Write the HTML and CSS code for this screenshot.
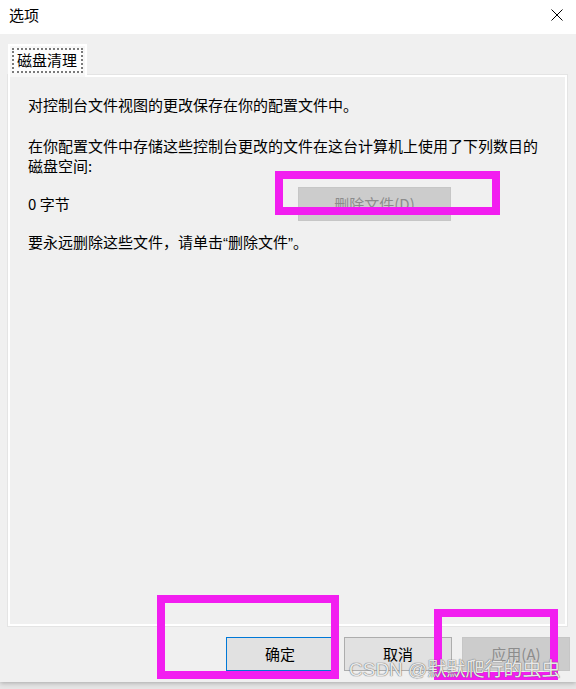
FILE: index.html
```html
<!DOCTYPE html>
<html lang="zh-CN">
<head>
<meta charset="utf-8">
<title>选项</title>
<link rel="stylesheet" href="styles.css">
</head>
<body>
<div class="window">
  <div class="titlebar">
    <span class="title">选项</span>
    <svg class="close" width="12" height="12" viewBox="0 0 12 12" aria-hidden="true">
      <path d="M0.5 0.5 L11.5 11.5 M11.5 0.5 L0.5 11.5" stroke="#000" stroke-width="1" fill="none"/>
    </svg>
  </div>
  <div class="content">
    <div class="tabs">
      <div class="tab"><span class="tab-label">磁盘清理</span></div>
    </div>
    <div class="panel">
      <p class="line gap-after">对控制台文件视图的更改保存在你的配置文件中。</p>
      <p class="line">在你配置文件中存储这些控制台更改的文件在这台计算机上使用了下列数目的<br>磁盘空间:</p>
      <div class="size-row">
        <span class="size-label">0 字节</span>
        <button class="btn btn-disabled btn-delete" disabled>删除文件(D)</button>
      </div>
      <p class="line">要永远删除这些文件，请单击<span class="latin-quote">“</span>删除文件<span class="latin-quote">”</span>。</p>
    </div>
    <div class="actions">
      <button class="btn btn-default">确定</button>
      <button class="btn">取消</button>
      <button class="btn btn-disabled" disabled>应用(A)</button>
    </div>
  </div>
  <div class="mark mark-1"></div>
  <div class="mark mark-2"></div>
  <div class="mark mark-3"></div>
  <div class="watermark">CSDN @默默爬行的虫虫</div>
</div>
</body>
</html>
```

FILE: styles.css
```css
html, body {
  margin: 0;
  padding: 0;
}
body {
  width: 576px;
  height: 689px;
  overflow: hidden;
  background: #e6e6e6;
  font-family: "Noto Sans CJK SC", "Liberation Sans", sans-serif;
  font-size: 15px;
  color: #000;
}
.window {
  position: relative;
  width: 576px;
  height: 682px;
  background: #f0f0f0;
  box-shadow: 0 1px 5px rgba(0, 0, 0, 0.28);
}
.titlebar {
  height: 34px;
  background: #fff;
  display: flex;
  align-items: center;
  justify-content: space-between;
  padding: 0 13px 0 9px;
  box-sizing: border-box;
}
.title {
  font-size: 15px;
  line-height: 20px;
  margin-top: -5px;
}
.close {
  display: block;
  margin-top: -4px;
}
.content {
  padding-top: 10px;
}
.tabs {
  display: flex;
  padding-left: 8px;
  height: 31px;
}
.tab {
  position: relative;
  z-index: 1;
  width: 79px;
  height: 33px;
  box-sizing: border-box;
  border: 2px solid #fff;
  border-bottom: none;
  background: #f7f7f7;
  padding: 2px 2px 0 2px;
}
.tab-label {
  display: block;
  height: 25px;
  box-sizing: border-box;
  border: 2px dotted #7a7a7a;
  background: #fdfdfd;
  line-height: 20px;
  padding-left: 3px;
  font-size: 15px;
}
.panel {
  margin-left: 8px;
  width: 559px;
  height: 551px;
  box-sizing: border-box;
  border: 2px solid #fff;
  box-shadow: 0 0 0 1px #e4e4e4;
  padding: 18px 18px 0 18px;
}
.line {
  margin: 0;
  line-height: 20px;
  font-size: 15px;
}
.latin-quote {
  font-family: "Liberation Sans", sans-serif;
}
.gap-after {
  margin-bottom: 21px;
}
.size-row {
  display: flex;
  align-items: center;
  margin: 11px 0 11px 0;
  height: 34px;
}
.size-label {
  width: 270px;
  line-height: 20px;
}
.btn {
  font-family: "Noto Sans CJK SC", "Liberation Sans", sans-serif;
  font-size: 15px;
  line-height: 20px;
  width: 108px;
  height: 34px;
  padding: 0;
  box-sizing: border-box;
  background: #e1e1e1;
  border: 1px solid #adadad;
  color: #000;
}
.btn-default {
  border-color: #0078d7;
}
.btn-disabled {
  background: #cccccc;
  border-color: #c6c6c6;
  color: #8c8c8c;
}
.btn-delete {
  width: 153px;
}
.actions {
  display: flex;
  justify-content: flex-end;
  gap: 10px;
  padding-right: 6px;
  margin-top: 11px;
}
.mark {
  position: absolute;
  border: 8px solid #f21ef0;
  box-sizing: border-box;
}
.mark-1 {
  left: 275px;
  top: 171px;
  width: 225px;
  height: 44px;
}
.mark-2 {
  left: 157px;
  top: 595px;
  width: 182px;
  height: 84px;
}
.mark-3 {
  left: 434px;
  top: 609px;
  width: 124px;
  height: 71px;
}
.watermark {
  position: absolute;
  left: 349px;
  top: 660px;
  font-family: "Liberation Sans", "Noto Sans CJK SC", sans-serif;
  font-size: 19px;
  line-height: 20px;
  color: rgba(250, 250, 250, 0.9);
  text-shadow: 0 0 1px #6a6a6a, 0 0 1px #6a6a6a;
  white-space: nowrap;
}
```
